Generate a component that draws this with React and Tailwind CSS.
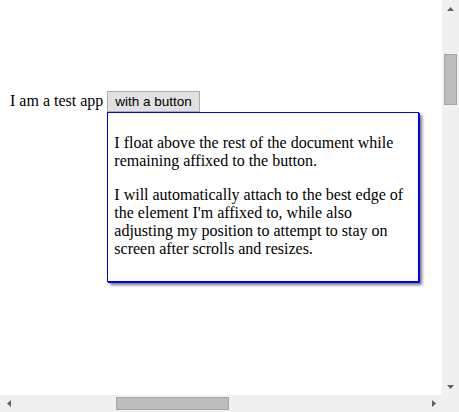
import React from "react";

function Arrow({ dir }) {
  const pts = {
    up: "0,4 3.5,0 7,4",
    down: "0,0 7,0 3.5,4",
    left: "4,0 4,7 0,3.5",
    right: "0,0 4,3.5 0,7",
  };
  const vertical = dir === "up" || dir === "down";
  return (
    <svg
      width={vertical ? 7 : 4}
      height={vertical ? 4 : 7}
      viewBox={vertical ? "0 0 7 4" : "0 0 4 7"}
    >
      <polygon points={pts[dir]} fill="#606068" />
    </svg>
  );
}

export default function App() {
  return (
    <div className="w-[459px] h-[412px] flex flex-col bg-white overflow-hidden">
      <div className="flex flex-1 min-h-0">
        {/* page area */}
        <div className="flex-1 min-w-0 overflow-hidden font-['Liberation_Serif',serif] text-[16px] text-black">
          <div className="pt-[90px] pl-[10px] leading-[21px] whitespace-nowrap">
            <span>I am a test app </span>
            <span className="relative inline-block align-top">
              <button className="h-[21px] px-[7px] font-['Liberation_Sans',Arial,sans-serif] text-[13.5px] leading-[17px] bg-[#e1e1e1] border border-[#adadad] text-black">
                with a button
              </button>
              <div className="absolute top-full left-0 w-[312px] bg-white border border-[#0000ff] shadow-[1px_1px_0_#0000ff,3px_3px_3px_rgba(0,0,0,0.55)] pl-[6px] pr-[6px] pt-[5px] pb-[7px] whitespace-normal leading-[18px]">
                <p className="my-4">
                  I float above the rest of the document while remaining
                  affixed to the button.
                </p>
                <p className="my-4">
                  I will automatically attach to the best edge of the element
                  I'm affixed to, while also adjusting my position to attempt
                  to stay on screen after scrolls and resizes.
                </p>
              </div>
            </span>
          </div>
        </div>
        {/* vertical scrollbar */}
        <div className="w-[17px] bg-[#f0f0f0] flex flex-col items-center">
          <div className="h-[17px] flex items-center justify-center">
            <Arrow dir="up" />
          </div>
          <div className="flex-1 w-full px-[2px]">
            <div className="mt-[37px] h-[51px] bg-[#bcbcbc] border border-[#a6a6a6]" />
          </div>
          <div className="h-[17px] flex items-center justify-center">
            <Arrow dir="down" />
          </div>
        </div>
      </div>
      {/* horizontal scrollbar */}
      <div className="h-[17px] flex bg-[#f0f0f0]">
        <div className="w-[17px] flex items-center justify-center">
          <Arrow dir="left" />
        </div>
        <div className="flex-1 py-[2px]">
          <div className="ml-[99px] w-[113px] h-full bg-[#bcbcbc] border border-[#a6a6a6]" />
        </div>
        <div className="w-[17px] flex items-center justify-center">
          <Arrow dir="right" />
        </div>
        <div className="w-[17px]" />
      </div>
    </div>
  );
}
